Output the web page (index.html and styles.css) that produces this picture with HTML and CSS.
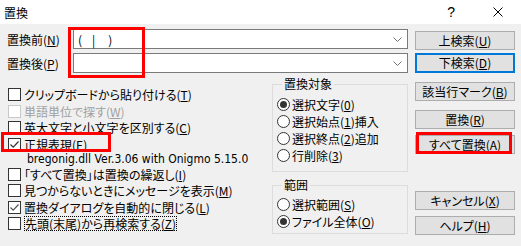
FILE: index.html
```html
<!DOCTYPE html>
<html lang="ja">
<head>
    <meta charset="UTF-8">
    <meta name="viewport" content="width=device-width, initial-scale=1.0">
    <title>置換</title>
    <link rel="stylesheet" href="styles.css">
</head>
<body>
<div class="window">
    <div class="titlebar">
        <span class="title">置換</span>
        <span class="help">?</span>
        <svg class="close" width="10" height="10" viewBox="0 0 10 10">
            <path d="M0.5 0.5 L9.5 9.5 M9.5 0.5 L0.5 9.5" stroke="#000" stroke-width="1" fill="none"/>
        </svg>
    </div>

    <div class="dialog">
        <div class="main">
            <div class="field">
                <label class="field-label">置換前(<u>N</u>)</label>
                <div class="combo">
                    <span class="combo-text">(<span class="caret">|</span>)</span>
                    <svg class="chevron" width="9" height="5" viewBox="0 0 9 5"><path d="M0.5 0.5 L4.5 4.5 L8.5 0.5" stroke="#707070" fill="none"/></svg>
                </div>
            </div>
            <div class="field">
                <label class="field-label">置換後(<u>P</u>)</label>
                <div class="combo">
                    <span class="combo-text"></span>
                    <svg class="chevron" width="9" height="5" viewBox="0 0 9 5"><path d="M0.5 0.5 L4.5 4.5 L8.5 0.5" stroke="#707070" fill="none"/></svg>
                </div>
            </div>

            <div class="lower">
                <div class="checks">
                    <div class="check"><span class="box"></span>クリップボードから貼り付ける(<u>T</u>)</div>
                    <div class="check disabled"><span class="box"></span>単語単位で探す(<u>W</u>)</div>
                    <div class="check"><span class="box"></span>英大文字と小文字を区別する(<u>C</u>)</div>
                    <div class="check"><span class="box checked"><svg width="11" height="11" viewBox="0 0 11 11"><path d="M1.5 5.5 L4.2 8.2 L9.5 2.5" stroke="#333" stroke-width="1.2" fill="none"/></svg></span>正規表現(<u>E</u>)</div>
                    <div class="note">bregonig.dll Ver.3.06 with Onigmo 5.15.0</div>
                    <div class="check"><span class="box"></span>「すべて置換」は置換の繰返し(<u>I</u>)</div>
                    <div class="check"><span class="box"></span>見つからないときにメッセージを表示(<u>M</u>)</div>
                    <div class="check"><span class="box checked"><svg width="11" height="11" viewBox="0 0 11 11"><path d="M1.5 5.5 L4.2 8.2 L9.5 2.5" stroke="#555" stroke-width="1.2" fill="none"/></svg></span>置換ダイアログを自動的に閉じる(<u>L</u>)</div>
                    <div class="check"><span class="box"></span><span class="focus">先頭(末尾)から再検索する(<u>Z</u>)</span></div>
                </div>

                <div class="groups">
                    <fieldset class="group group-target">
                        <legend>置換対象</legend>
                        <div class="radio"><span class="circle on"></span>選択文字(<u>0</u>)</div>
                        <div class="radio"><span class="circle"></span>選択始点(<u>1</u>)挿入</div>
                        <div class="radio"><span class="circle"></span>選択終点(<u>2</u>)追加</div>
                        <div class="radio"><span class="circle"></span>行削除(<u>3</u>)</div>
                    </fieldset>
                    <fieldset class="group group-range">
                        <legend>範囲</legend>
                        <div class="radio"><span class="circle"></span>選択範囲(<u>S</u>)</div>
                        <div class="radio"><span class="circle on"></span>ファイル全体(<u>O</u>)</div>
                    </fieldset>
                </div>
            </div>
        </div>

        <div class="buttons">
            <button class="btn">上検索(<u>U</u>)</button>
            <button class="btn btn-default">下検索(<u>D</u>)</button>
            <button class="btn gap-md">該当行マーク(<u>B</u>)</button>
            <button class="btn gap-md">置換(<u>R</u>)</button>
            <button class="btn gap-sm">すべて置換(<u>A</u>)</button>
            <button class="btn gap-lg">キャンセル(<u>X</u>)</button>
            <button class="btn gap-sm">ヘルプ(<u>H</u>)</button>
        </div>
    </div>

    <div class="mark mark-find"></div>
    <div class="mark mark-regex"></div>
    <div class="mark mark-all"></div>
</div>
</body>
</html>
```

FILE: styles.css
```css
body {
    margin: 0;
    font-family: "Noto Sans CJK JP", sans-serif;
    font-size: 12px;
    font-feature-settings: "palt";
    color: #000;
}
u {
    text-underline-offset: 1px;
}
.window {
    position: relative;
    width: 521px;
    height: 246px;
    background: #f0f0f0;
    overflow: hidden;
}
.titlebar {
    display: flex;
    align-items: center;
    height: 24px;
    background: #fff;
}
.title {
    padding-left: 4px;
}
.help {
    margin-left: auto;
    margin-right: 38px;
    font-family: "Liberation Sans", sans-serif;
    font-size: 14px;
}
.close {
    margin-right: 18px;
}

.dialog {
    display: flex;
    gap: 7px;
    padding-top: 5px;
}
.main {
    width: 408px;
}
.field {
    display: flex;
    align-items: center;
    height: 20px;
    margin-bottom: 4px;
}
.field-label {
    width: 73px;
    padding-left: 7px;
    box-sizing: border-box;
}
.combo {
    flex: 1;
    display: flex;
    align-items: center;
    height: 20px;
    padding: 0 5px 0 4px;
    box-sizing: border-box;
    border: 1px solid #7a7a7a;
    background: #fff;
}
.caret {
    margin: 0 13px 0 10px;
}
.chevron {
    margin-left: auto;
}

.lower {
    display: flex;
    margin-top: 1px;
}
.checks {
    width: 272px;
    padding-top: 9.5px;
}
.check {
    display: flex;
    align-items: center;
    height: 16.6px;
    padding-left: 8px;
    white-space: nowrap;
}
.box {
    flex: none;
    display: flex;
    align-items: center;
    justify-content: center;
    width: 13px;
    height: 13px;
    margin-right: 3px;
    box-sizing: border-box;
    border: 1px solid #333;
    background: #fff;
}
.disabled {
    color: #a0a0a0;
}
.disabled .box {
    border-color: #c8c8c8;
}
.note {
    height: 13px;
    line-height: 13px;
    padding-left: 27px;
    font-family: "Liberation Sans Narrow", "DejaVu Sans Condensed", sans-serif;
    font-size: 12px;
}
.focus {
    line-height: 13px;
    border: 1px dotted #000;
}

.groups {
    width: 136px;
}
.group {
    margin: 0;
    min-width: 0;
    border: 1px solid #dcdcdc;
}
.group legend {
    margin-left: 5px;
    padding: 0 2px;
    line-height: 14px;
}
.group-target {
    padding: 4.5px 0 7.5px 4px;
}
.group-range {
    margin-top: 6px;
    padding: 3.5px 0 3.5px 4px;
}
.radio {
    display: flex;
    align-items: center;
    height: 17px;
    white-space: nowrap;
}
.circle {
    position: relative;
    flex: none;
    width: 13px;
    height: 13px;
    margin-right: 2px;
    box-sizing: border-box;
    border: 1px solid #333;
    border-radius: 50%;
    background: #fff;
}
.circle.on::after {
    content: "";
    position: absolute;
    left: 2px;
    top: 2px;
    width: 7px;
    height: 7px;
    border-radius: 50%;
    background: #333;
}

.buttons {
    display: flex;
    flex-direction: column;
    width: 100px;
    padding-top: 2px;
}
.btn {
    height: 19px;
    padding: 0;
    margin: 0;
    box-sizing: border-box;
    border: 1px solid #adadad;
    background: #e1e1e1;
    font: inherit;
    line-height: 16px;
    color: #000;
}
.btn-default {
    height: 20px;
    margin-top: 3px;
    border: 2px solid #0078d7;
}
.gap-sm {
    margin-top: 6px;
}
.gap-md {
    margin-top: 9px;
}
.gap-lg {
    margin-top: 37px;
}

.mark {
    position: absolute;
    box-sizing: border-box;
    border: 3px solid #f00;
}
.mark-find {
    left: 68px;
    top: 27px;
    width: 77px;
    height: 51px;
}
.mark-regex {
    left: 1px;
    top: 132px;
    width: 110px;
    height: 20px;
}
.mark-all {
    left: 416px;
    top: 132px;
    width: 96px;
    height: 22px;
}
```
